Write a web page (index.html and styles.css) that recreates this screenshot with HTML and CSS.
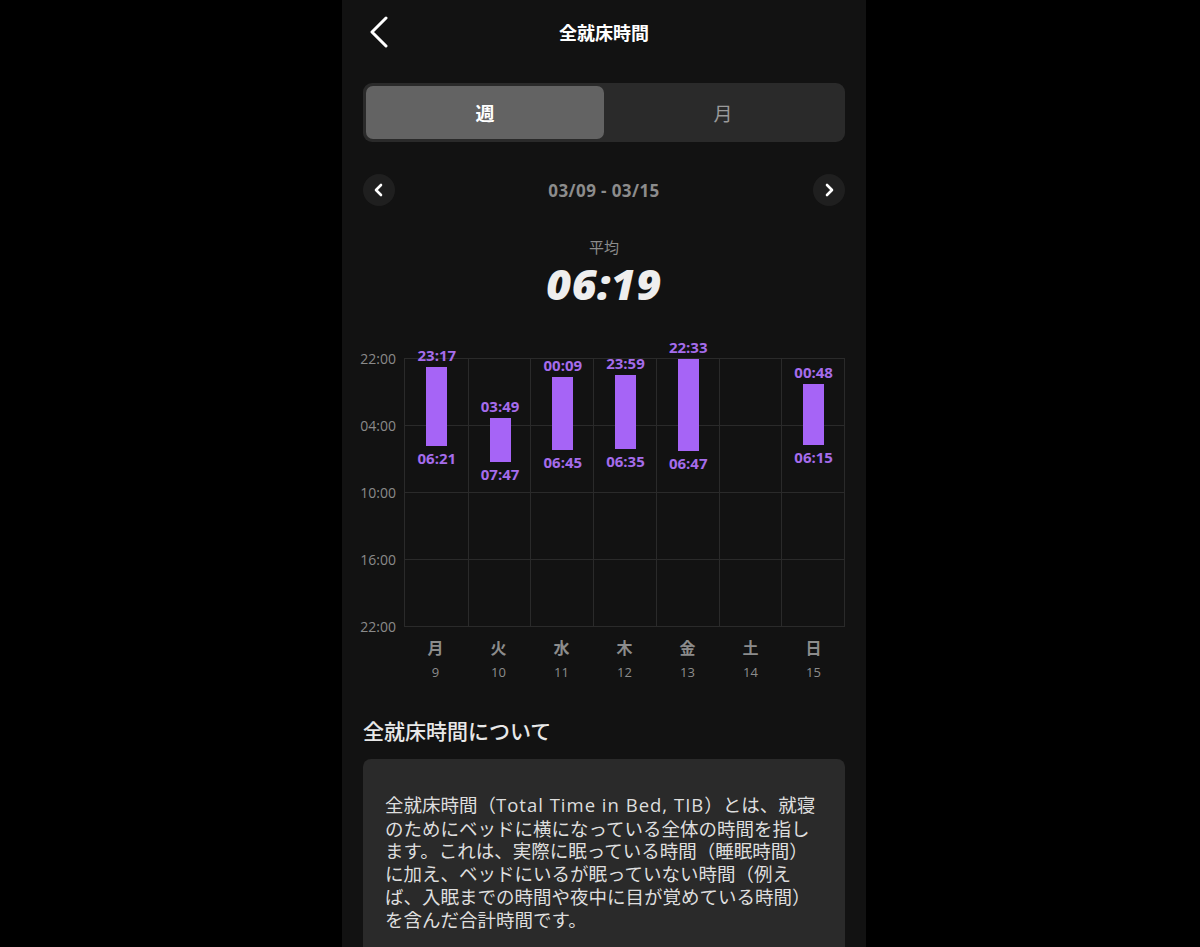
FILE: index.html
```html
<!DOCTYPE html>
<html lang="ja">
<head>
<meta charset="utf-8">
<title>全就床時間</title>
<link rel="stylesheet" href="styles.css">
</head>
<body>
<div class="stage">
  <main class="phone">
    <header class="topbar">
      <button class="back" aria-label="戻る">
        <svg width="20" height="32" viewBox="0 0 20 32"><path d="M17 2 L3 16 L17 30" fill="none" stroke="#fff" stroke-width="3" stroke-linecap="round" stroke-linejoin="round"/></svg>
      </button>
      <h1 class="title">全就床時間</h1>
    </header>

    <div class="segment">
      <div class="seg-item active">週</div>
      <div class="seg-item">月</div>
    </div>

    <div class="datenav">
      <button class="navbtn" aria-label="前へ">
        <svg width="12" height="14" viewBox="0 0 12 14"><path d="M8 2 L3 7 L8 12" fill="none" stroke="#fff" stroke-width="2.6" stroke-linecap="round" stroke-linejoin="round"/></svg>
      </button>
      <div class="range">03/09 - 03/15</div>
      <button class="navbtn" aria-label="次へ">
        <svg width="12" height="14" viewBox="0 0 12 14"><path d="M4 2 L9 7 L4 12" fill="none" stroke="#fff" stroke-width="2.6" stroke-linecap="round" stroke-linejoin="round"/></svg>
      </button>
    </div>

    <div class="avg">
      <div class="avg-label">平均</div>
      <div class="avg-value">06:19</div>
    </div>

    <section class="chart">
      <div class="yaxis">
        <span>22:00</span><span>04:00</span><span>10:00</span><span>16:00</span><span>22:00</span>
      </div>
      <div class="plot">
        <div class="col"><div class="bar" style="top:8px;height:79px"><span class="lbl lbl-top">23:17</span><span class="lbl lbl-bot">06:21</span></div></div>
        <div class="col"><div class="bar" style="top:59px;height:44px"><span class="lbl lbl-top">03:49</span><span class="lbl lbl-bot">07:47</span></div></div>
        <div class="col"><div class="bar" style="top:18px;height:73px"><span class="lbl lbl-top">00:09</span><span class="lbl lbl-bot">06:45</span></div></div>
        <div class="col"><div class="bar" style="top:16px;height:74px"><span class="lbl lbl-top">23:59</span><span class="lbl lbl-bot">06:35</span></div></div>
        <div class="col"><div class="bar" style="top:0px;height:92px"><span class="lbl lbl-top">22:33</span><span class="lbl lbl-bot">06:47</span></div></div>
        <div class="col"></div>
        <div class="col"><div class="bar" style="top:25px;height:61px"><span class="lbl lbl-top">00:48</span><span class="lbl lbl-bot">06:15</span></div></div>
      </div>
    </section>
    <div class="xaxis">
      <div class="day"><span class="dname">月</span><span class="dnum">9</span></div>
      <div class="day"><span class="dname">火</span><span class="dnum">10</span></div>
      <div class="day"><span class="dname">水</span><span class="dnum">11</span></div>
      <div class="day"><span class="dname">木</span><span class="dnum">12</span></div>
      <div class="day"><span class="dname">金</span><span class="dnum">13</span></div>
      <div class="day"><span class="dname">土</span><span class="dnum">14</span></div>
      <div class="day"><span class="dname">日</span><span class="dnum">15</span></div>
    </div>

    <h2 class="about-title">全就床時間について</h2>
    <div class="card">
      <p>全就床時間（<span class="latin">Total Time in Bed, TIB</span>）とは、就寝のためにベッドに横になっている全体の時間を指します。これは、実際に眠っている時間（睡眠時間）に加え、ベッドにいるが眠っていない時間（例えば、入眠までの時間や夜中に目が覚めている時間）を含んだ合計時間です。</p>
    </div>
  </main>
</div>
</body>
</html>
```

FILE: styles.css
```css
* { box-sizing: border-box; }
html, body { margin: 0; padding: 0; background: #000; }
body {
  font-family: "Open Sans", "Noto Sans CJK JP", sans-serif;
  color: #fff;
}
.stage {
  display: flex;
  justify-content: center;
  padding-left: 8px;
  min-height: 947px;
  overflow: hidden;
}
.phone {
  width: 524px;
  background: #121212;
  min-height: 947px;
  padding: 0 21px;
  display: flex;
  flex-direction: column;
}
button { font: inherit; border: 0; padding: 0; background: none; cursor: pointer; }

.topbar {
  position: relative;
  height: 64px;
  display: flex;
  align-items: center;
  justify-content: center;
}
.back {
  position: absolute;
  left: 6px;
  top: 16px;
  width: 20px;
  height: 32px;
  display: flex;
}
.title {
  margin: 0;
  font-family: "Noto Sans CJK JP", sans-serif;
  font-size: 18px;
  font-weight: 700;
  color: #fff;
}

.segment {
  margin-top: 19px;
  height: 59px;
  background: #2a2a2a;
  border-radius: 9px;
  padding: 3px;
  display: flex;
}
.seg-item {
  flex: 1;
  display: flex;
  align-items: center;
  justify-content: center;
  font-family: "Noto Sans CJK JP", sans-serif;
  font-size: 19px;
  color: #9a9a9a;
  border-radius: 7px;
}
.seg-item.active {
  background: #636363;
  color: #fff;
  font-weight: 700;
}

.datenav {
  margin-top: 32px;
  height: 32px;
  display: flex;
  align-items: center;
  justify-content: space-between;
}
.navbtn {
  width: 32px;
  height: 32px;
  border-radius: 50%;
  background: #1f1f1f;
  display: flex;
  align-items: center;
  justify-content: center;
}
.range {
  font-family: "Open Sans", sans-serif;
  font-size: 17px;
  font-weight: 700;
  letter-spacing: 0.4px;
  color: #8c8c8c;
}

.avg {
  margin-top: 31px;
  display: flex;
  flex-direction: column;
  align-items: center;
}
.avg-label {
  font-family: "Noto Sans CJK JP", sans-serif;
  font-size: 15px;
  line-height: 20px;
  color: #8c8c8c;
}
.avg-value {
  margin-top: 5px;
  font-family: "Open Sans", sans-serif;
  font-size: 43px;
  line-height: 44px;
  font-weight: 800;
  font-style: italic;
  color: #eeeeee;
  letter-spacing: 0.5px;
}

.chart {
  margin-top: 52px;
  margin-left: -7px;
  display: flex;
  gap: 8px;
}
.yaxis {
  width: 40px;
  height: 269px;
  display: flex;
  flex-direction: column;
  justify-content: space-between;
  align-items: flex-end;
}
.yaxis span {
  height: 1px;
  display: flex;
  align-items: center;
  font-size: 14px;
  color: #8a8a8a;
  white-space: nowrap;
}
.plot {
  width: 441px;
  height: 269px;
  border: 1px solid #2a2a2a;
  display: grid;
  grid-template-columns: repeat(7, 1fr);
  background-image: linear-gradient(#2a2a2a, #2a2a2a), linear-gradient(#2a2a2a, #2a2a2a), linear-gradient(#2a2a2a, #2a2a2a);
  background-size: 100% 1px, 100% 1px, 100% 1px;
  background-position: 0 66px, 0 133px, 0 200px;
  background-repeat: no-repeat;
}
.col {
  position: relative;
  border-left: 1px solid #2a2a2a;
}
.col:first-child { border-left: 0; }
.bar {
  position: absolute;
  left: 50%;
  width: 21px;
  margin-left: -10px;
  background: #a664f6;
}
.lbl {
  position: absolute;
  left: 50%;
  transform: translateX(-50%);
  font-size: 15px;
  line-height: 16px;
  font-weight: 700;
  color: #a56ceb;
  white-space: nowrap;
}
.lbl-top { bottom: 100%; margin-bottom: 4px; }
.lbl-bot { top: 100%; margin-top: 4px; }

.xaxis {
  margin-left: 41px;
  width: 441px;
  display: grid;
  grid-template-columns: repeat(7, 1fr);
  margin-top: 10px;
}
.day {
  display: flex;
  flex-direction: column;
  align-items: center;
  gap: 6px;
}
.dname {
  font-family: "Noto Sans CJK JP", sans-serif;
  font-weight: 700;
  font-size: 16px;
  line-height: 20px;
  color: #8c8c8c;
}
.dnum {
  font-size: 13px;
  line-height: 18px;
  color: #8c8c8c;
}

.about-title {
  margin: 35px 0 0;
  font-family: "Noto Sans CJK JP", sans-serif;
  font-size: 21px;
  line-height: 28px;
  font-weight: 500;
  color: #e8e8e8;
}
.card {
  margin-top: 15px;
  background: #2a2a2a;
  border-radius: 8px;
  padding: 34px 20px 34px 22px;
}
.card p {
  margin: 0;
  font-family: "Noto Sans CJK JP", sans-serif;
  font-size: 18.5px;
  line-height: 22.7px;
  color: #dedede;
}
.card .latin {
  font-family: "Open Sans", sans-serif;
  letter-spacing: 1px;
}
```
